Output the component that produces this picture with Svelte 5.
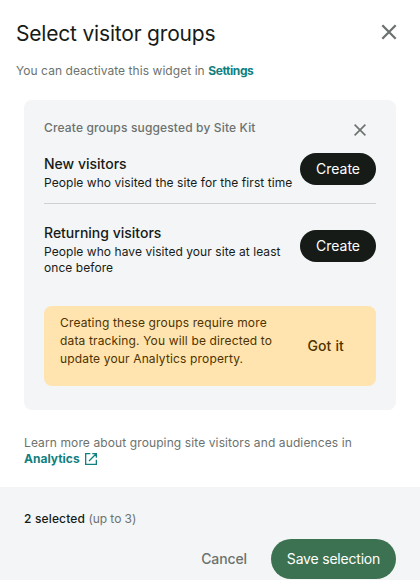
<script>
  const groups = [
    { name: 'New visitors', lines: ['People who visited the site for the first time'], key: 'new' },
    { name: 'Returning visitors', lines: ['People who have visited your site at least', 'once before'], key: 'returning' }
  ];
  const notice = ['Creating these groups require more', 'data tracking. You will be directed to', 'update your Analytics property.'];
</script>

<main class="panel">
  <header>
    <div class="heading">
      <h1>Select visitor groups</h1>
      <button class="icon" aria-label="Close">
        <svg width="16" height="16" viewBox="0 0 16 16"><path d="M1.3 1.3 14.7 14.7M14.7 1.3 1.3 14.7" /></svg>
      </button>
    </div>
    <p class="sub"><span>You can deactivate this widget in</span> <a class="settings" href="#settings">Settings</a></p>
  </header>

  <section class="card">
    <div class="card-head">
      <h2>Create groups suggested by Site Kit</h2>
      <button class="icon small" aria-label="Dismiss">
        <svg width="12" height="12" viewBox="0 0 12 12"><path d="M.6.6 11.4 11.4M11.4.6.6 11.4" /></svg>
      </button>
    </div>
    {#each groups as group}
      <div class="group {group.key}">
        <div class="info">
          <h3>{group.name}</h3>
          {#each group.lines as line}<p>{line}</p>{/each}
        </div>
        <button class="create"><span>Create</span></button>
      </div>
    {/each}
    <div class="notice">
      <div>
        {#each notice as line}<p>{line}</p>{/each}
      </div>
      <button class="got">Got it</button>
    </div>
  </section>

  <div class="learn">
    <p>Learn more about grouping site visitors and audiences in</p>
    <a href="#analytics"><span>Analytics</span>
      <svg width="12" height="12" viewBox="0 0 12 12"><path d="M5.3.65H.65v10.7h10.7V6.7M7.3.65h4.05V4.7M11.2.8 4 8" /></svg>
    </a>
  </div>

  <footer>
    <p class="count"><b>2 selected</b> <span>(up to 3)</span></p>
    <div class="actions">
      <button class="cancel">Cancel</button>
      <button class="save"><span>Save selection</span></button>
    </div>
  </footer>
</main>

<style>
  :global(body) { overflow: hidden; background: #fff; }
  .panel { box-sizing: border-box; width: 420px; height: 580px; overflow: hidden; display: flex; flex-direction: column; font-family: Inter, sans-serif; font-size: 12px; color: #161b18; }
  h1, h2, h3, p { margin: 0; white-space: nowrap; }
  button { border: 0; padding: 0; background: none; font: inherit; color: inherit; }
  a { color: #108080; text-decoration: none; font-weight: 700; }
  svg { display: block; fill: none; stroke: #6c726e; }
  header { padding: 20px 24px 0 16px; height: 80px; }
  .heading { display: flex; justify-content: space-between; }
  h1 { font-size: 21px; line-height: 28px; font-weight: 400; letter-spacing: -0.19px; }
  .icon { margin-top: 4px; height: 16px; }
  .heading .icon { margin-right: -0.5px; margin-top: 3.5px; }
  .icon svg { stroke-width: 2.3; }
  .sub { margin-top: 15px; line-height: 16px; color: #6c726e; letter-spacing: 0.055px; }
  .settings { letter-spacing: -0.4px; }
  .card { box-sizing: border-box; margin: 0 24px; height: 310px; flex: none; background: #f3f5f7; border-radius: 8px; padding: 20px; }
  .card-head { display: flex; justify-content: space-between; height: 33px; }
  h2 { font-size: 12px; line-height: 16px; font-weight: 500; letter-spacing: 0.15px; color: #6c726e; }
  .card .small { margin: 4px 10px 0 0; height: 12px; }
  .small svg { stroke-width: 1.6; }
  .group { display: flex; justify-content: space-between; align-items: flex-start; }
  .new { height: 50px; border-bottom: 1px solid #cdd1d4; }
  .returning { height: 76px; padding-top: 26px; }
  .info { padding-top: 1px; width: 256px; }
  .returning .info { padding-top: 0; margin-top: -7px; }
  h3 { font-size: 14px; line-height: 20px; font-weight: 500; letter-spacing: 0; padding-bottom: 1px; }
  .info p { line-height: 16px; letter-spacing: 0.06px; }
  .create { width: 76px; height: 32px; border-radius: 16px; background: #161b18; color: #fff; font-size: 14px; padding-bottom: 2px; }
  .notice { box-sizing: border-box; height: 80px; background: #ffe4af; border-radius: 8px; color: #4e3300; padding: 8px 32px 0 16px; display: flex; justify-content: space-between; }
  .notice p { line-height: 18px; letter-spacing: 0.15px; }
  .got { height: 63px; font-size: 14px; font-weight: 500; letter-spacing: 0.15px; }
  .learn { margin: 25px 24px 0; height: 52px; line-height: 16px; color: #6c726e; letter-spacing: 0.11px; }
  .learn a { display: flex; gap: 5px; align-items: center; width: 80px; letter-spacing: 0; }
  .learn svg { stroke: #108080; stroke-width: 1.3; }
  footer { flex: 1; background: #f3f5f7; padding: 24px 24px 0; }
  .count { line-height: 16px; color: #6c726e; letter-spacing: -0.05px; }
  .count b { font-weight: 500; color: #161b18; letter-spacing: 0.15px; }
  .actions { margin-top: 12px; display: flex; justify-content: flex-end; font-size: 14px; }
  .cancel { font-weight: 500; color: #6c726e; margin-right: 24px; letter-spacing: -0.1px; padding-bottom: 1px; }
  .save { width: 125px; height: 40px; border-radius: 20px; background: #3c7251; color: #fff; font-weight: 400; letter-spacing: -0.2px; padding-bottom: 2px; }
</style>
